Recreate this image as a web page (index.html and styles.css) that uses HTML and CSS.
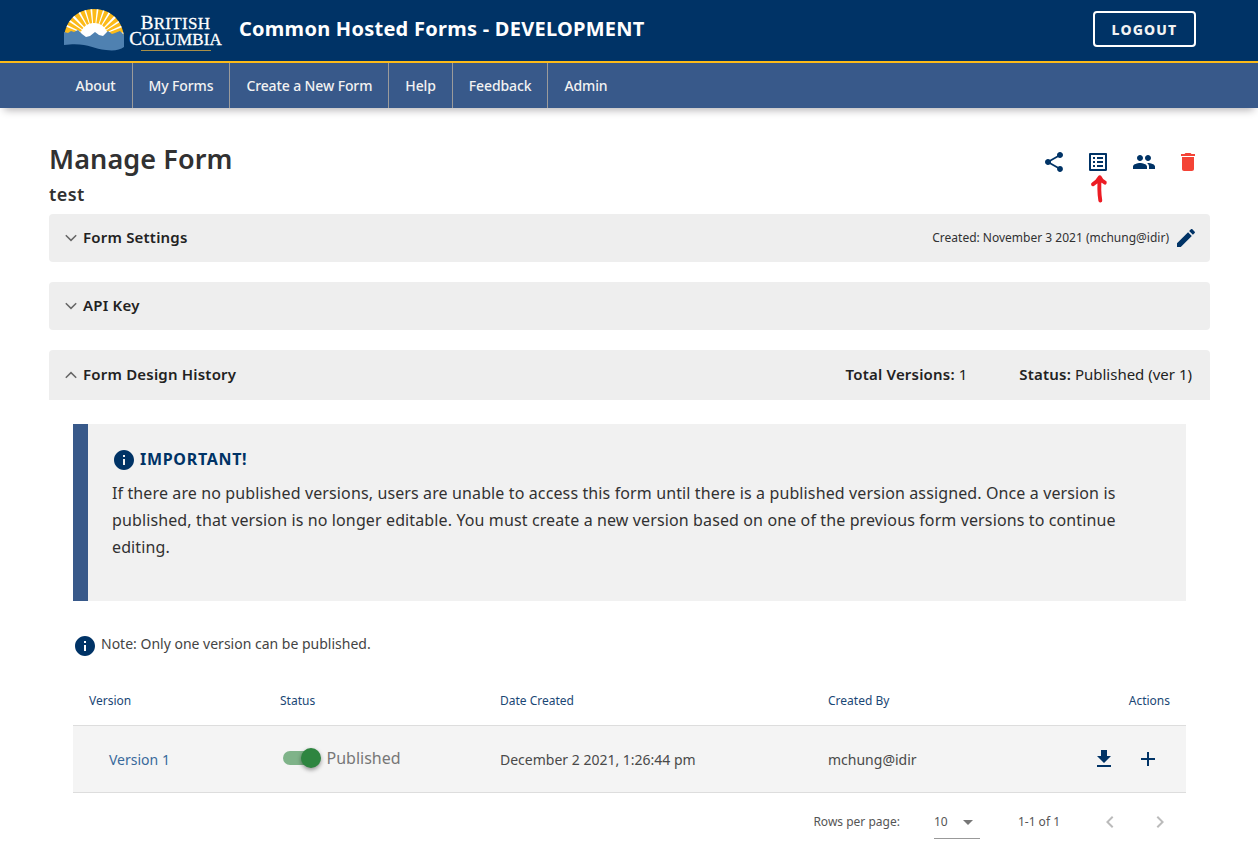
FILE: index.html
```html
<!DOCTYPE html>
<html lang="en">
<head>
<meta charset="utf-8">
<title>Common Hosted Forms</title>
<link rel="stylesheet" href="styles.css">
</head>
<body>
<header class="header">
  <div class="brand">
    <svg class="sun" width="62" height="43" viewBox="0 0 62 43">
      <defs><clipPath id="dome"><path d="M1 30C2 12 15 1 31 1s29 11 30 29z"/></clipPath></defs>
      <g clip-path="url(#dome)">
        <rect width="62" height="42" fill="#fcba19"/>
        <circle cx="31" cy="29" r="14" fill="#fff"/>
        <path fill="#fff" d="M31 30L-4 25l-1 2zM31 30L0 15l-1 2zM31 30L3 9l-1 2zM31 30L8 4L6 6zM31 30L15 0l-2 1zM31 30L22-1h-2zM31 30L29-2h-2zM31 30L36-2h-2zM31 30L43-1h-2zM31 30L50 1l-2-1zM31 30L57 6l-2-2zM31 30L62 11l-1-2zM31 30L65 17l-1-2zM31 30L67 25v-2z"/>
      </g>
      <path fill="#4f81b1" d="M1 37V24l4 1 3-2 3 1 4-2 4 4 4 3 4-1 5-4 4 3 4 1 5-5 4 3 3-1 5-2 4 4v12C57 42 51 43 43 42 29 41 24 34 1 37z"/>
    </svg>
    <div class="wordmark"><span class="wm-top">B<small>RITISH</small></span><span class="wm-bottom">C<small>OLUMBIA</small></span><i></i></div>
  </div>
  <div class="app-title">Common Hosted Forms - DEVELOPMENT</div>
  <button class="logout">LOGOUT</button>
</header>
<nav class="nav"><a>About</a><a>My Forms</a><a>Create a New Form</a><a>Help</a><a>Feedback</a><a>Admin</a></nav>
<main class="main">
  <div class="page-head">
    <div>
      <h1>Manage Form</h1>
      <h2>test</h2>
    </div>
    <div class="tools">
      <svg class="icon" viewBox="0 0 24 24"><path d="M18 16.08c-.76 0-1.44.3-1.96.77L8.91 12.7c.05-.23.09-.46.09-.7s-.04-.47-.09-.7l7.05-4.11c.54.5 1.25.81 2.04.81 1.66 0 3-1.34 3-3s-1.34-3-3-3-3 1.34-3 3c0 .24.04.47.09.7L8.04 9.81C7.5 9.31 6.79 9 6 9c-1.66 0-3 1.34-3 3s1.34 3 3 3c.79 0 1.5-.31 2.04-.81l7.12 4.16c-.05.21-.08.43-.08.65 0 1.61 1.31 2.92 2.92 2.92s2.92-1.31 2.92-2.92-1.31-2.92-2.92-2.92z"/></svg>
      <span class="pointed">
        <svg class="icon" viewBox="0 0 24 24"><path d="M11 7h6v2h-6zm0 4h6v2h-6zm0 4h6v2h-6zM7 7h2v2H7zm0 4h2v2H7zm0 4h2v2H7zM20.1 3H3.9c-.5 0-.9.4-.9.9v16.2c0 .4.4.9.9.9h16.2c.4 0 .9-.5.9-.9V3.9c0-.5-.5-.9-.9-.9zM19 19H5V5h14z"/></svg>
        <svg class="arrow" width="20" height="32" viewBox="0 0 20 32"><path d="M11.300 27.500Q9.600 17 10.800 4.500M4 11.200Q8 9 10.800 4.200Q12.500 8 15.800 9.600" fill="none" stroke="#ec1c24" stroke-width="3.900" stroke-linecap="round" stroke-linejoin="round"/></svg>
      </span>
      <svg class="icon" viewBox="0 0 24 24"><path d="M16 11c1.660 0 2.990-1.340 2.990-3S17.660 5 16 5s-3 1.340-3 3 1.340 3 3 3zm-8 0c1.660 0 2.990-1.340 2.990-3S9.660 5 8 5 5 6.340 5 8s1.340 3 3 3zm0 2c-2.330 0-7 1.170-7 3.500V19h14v-2.500C15 14.170 10.330 13 8 13zm8 0c-.29 0-.62.02-.97.05 1.160.84 1.970 1.970 1.970 3.450V19h6v-2.500c0-2.330-4.670-3.500-7-3.500z"/></svg>
      <svg class="icon danger" viewBox="0 0 24 24"><path d="M6 19c0 1.100.9 2 2 2h8c1.100 0 2-.9 2-2V7H6v12zM19 4h-3.500l-1-1h-5l-1 1H5v2h14V4z"/></svg>
    </div>
  </div>
  <section class="panel">
    <svg class="chev" viewBox="0 0 12 8"><path d="M.8 1.200L6 6.400l5.200-5.200"/></svg><strong>Form Settings</strong>
    <span class="created">Created: November 3 2021 (mchung@idir)</span>
    <svg class="icon" viewBox="0 0 24 24"><path d="M3 17.250V21h3.750L17.810 9.940l-3.750-3.750L3 17.250zM20.710 7.040c.39-.39.39-1.020 0-1.410l-2.340-2.340c-.39-.39-1.020-.39-1.410 0l-1.830 1.830 3.750 3.750 1.830-1.830z"/></svg>
  </section>
  <section class="panel"><svg class="chev" viewBox="0 0 12 8"><path d="M.8 1.200L6 6.400l5.200-5.200"/></svg><strong>API Key</strong></section>
  <section class="panel open"><svg class="chev" viewBox="0 0 12 8"><path d="M.8 6.800L6 1.600l5.200 5.200"/></svg><strong>Form Design History</strong>
    <span class="total"><b>Total Versions:</b> 1</span><span class="status"><b>Status:</b> Published (ver 1)</span>
  </section>
  <div class="content">
    <div class="notice">
      <h3><svg class="icon" viewBox="0 0 24 24"><path d="M12 2C6.480 2 2 6.480 2 12s4.480 10 10 10 10-4.480 10-10S17.520 2 12 2zm1 15h-2v-6h2v6zm0-8h-2V7h2v2z"/></svg><span>IMPORTANT!</span></h3>
      <p>If there are no published versions, users are unable to access this form until there is a published version assigned. Once a version is<br>published, that version is no longer editable. You must create a new version based on one of the previous form versions to continue<br>editing.</p>
    </div>
    <div class="note"><svg class="icon" viewBox="0 0 24 24"><path d="M12 2C6.480 2 2 6.480 2 12s4.480 10 10 10 10-4.480 10-10S17.520 2 12 2zm1 15h-2v-6h2v6zm0-8h-2V7h2v2z"/></svg><span>Note: Only one version can be published.</span></div>
    <div class="row thead"><span>Version</span><span>Status</span><span>Date Created</span><span>Created By</span><span class="right">Actions</span></div>
    <div class="row tbody">
      <a class="version">Version 1</a>
      <span class="switch"><i class="track"><i class="thumb"></i></i><span>Published</span></span>
      <span>December 2 2021, 1:26:44 pm</span><span>mchung@idir</span>
      <span class="actions">
        <svg class="icon" viewBox="0 0 24 24"><path d="M19 9h-4V3H9v6H5l7 7 7-7zM5 18v2h14v-2H5z"/></svg>
        <svg class="icon" viewBox="0 0 24 24"><path d="M19 13h-6v6h-2v-6H5v-2h6V5h2v6h6v2z"/></svg>
      </span>
    </div>
    <div class="pager">
      <span class="rpp">Rows per page:</span>
      <span class="select">10<i></i></span>
      <span class="range">1-1 of 1</span>
      <svg class="page-btn" viewBox="0 0 24 24"><path d="M15.410 7.410L14 6l-6 6 6 6 1.410-1.410L10.830 12z"/></svg>
      <svg class="page-btn" viewBox="0 0 24 24"><path d="M10 6L8.590 7.410 13.170 12l-4.580 4.590L10 18l6-6z"/></svg>
    </div>
  </div>
</main>
</body>
</html>
```
FILE: styles.css
```css
* { box-sizing: border-box; }
body { margin: 0; width: 1258px; height: 858px; overflow: hidden; background: #fff; font-family: "Noto Sans", sans-serif; color: #313132; }
h1, h2, h3, p { margin: 0; }
.header { display: flex; height: 63px; padding: 0 62px 0 63px; background: #036; border-bottom: 2px solid #fcba19; }
.brand { display: flex; width: 176px; padding-top: 8px; }
.wordmark { display: flex; flex-direction: column; align-items: center; width: 95px; margin-left: 3px; padding-top: 7px; color: #fff; font-family: "Liberation Serif", serif; font-size: 19px; line-height: 15px; white-space: nowrap; -webkit-text-stroke: .3px #fff; }
.wordmark small { font-size: 17px; }
.wm-top { letter-spacing: .3px; }
.wm-bottom { letter-spacing: .08px; }
.wm-top, .wm-bottom { height: 16px; }
.wordmark i { width: 70px; height: 1px; margin-top: 3px; background: #a99047; }
.app-title { padding-top: 15px; color: #fff; font-size: 20px; line-height: 27px; font-weight: 700; letter-spacing: .26px; white-space: nowrap; }
.logout { width: 103px; height: 36px; margin: 11px 0 0 auto; padding: 0; border: 2px solid #fff; border-radius: 4px; background: #036; color: #f2f2f2; font: 800 14px "Noto Sans", sans-serif; letter-spacing: 1.15px; }
.nav { display: flex; height: 45px; padding-left: 59.6px; background: #38598a; box-shadow: 0 6px 8px -4px #b3b1b3; }
.nav a { padding: 0 16px; border-right: 1px solid #9b9b9b; color: #f2f2f2; font-size: 14px; line-height: 45px; font-weight: 500; letter-spacing: -.12px; white-space: nowrap; }
.nav a:last-child { border: 0; }
.main { padding: 34px 48px 0 49px; }
.page-head { display: flex; justify-content: space-between; height: 72px; }
h1 { margin-top: -1px; font-size: 27px; line-height: 35px; font-weight: 650; letter-spacing: .1px; }
h2 { padding-top: 4px; font-size: 18px; line-height: 28px; font-weight: 600; letter-spacing: .4px; }
.icon { display: block; flex: none; width: 24px; height: 24px; fill: #036; }
.tools { display: flex; gap: 20px; padding: 8px 10px 0 0; }
.tools .icon:nth-child(3) { margin-left: 2px; }
.tools .danger { fill: #f44336; }
.pointed { position: relative; }
.arrow { position: absolute; left: 3px; top: 23px; }
.panel { display: flex; align-items: center; height: 48px; margin-bottom: 20px; padding: 0 12px 0 16px; border-radius: 4px; background: #eee; font-size: 15px; color: #222; white-space: nowrap; }
.panel strong { padding-bottom: 2px; font-weight: 600; letter-spacing: .2px; }
.open { height: 50px; margin-bottom: 0; padding-right: 18px; border-radius: 4px 4px 0 0; }
.chev { width: 12px; height: 8px; margin-right: 6px; fill: none; stroke: #666; stroke-width: 1.5; }
.created { margin: 0 5px 0 auto; padding-bottom: 1px; font-size: 12px; color: #313132; }
.total { margin-left: auto; padding-bottom: 2px; }
.status { margin-left: 52px; padding-bottom: 2px; }
.panel b { font-weight: 600; letter-spacing: .2px; }
.content { padding: 24px; }
.notice { height: 177px; padding: 22px 24px; border-left: 15px solid #38598a; background: #f1f1f1; }
.notice h3 { display: flex; align-items: center; height: 26px; color: #036; font-size: 16px; font-weight: 700; letter-spacing: .7px; }
.notice h3 .icon { margin-top: 2px; }
.notice h3 span { margin-left: 4px; }
.notice p { padding-top: 8px; font-size: 16px; line-height: 27px; letter-spacing: .12px; white-space: nowrap; }
.note { display: flex; height: 75px; padding-top: 33px; font-size: 14px; line-height: 20px; color: #444; }
.note span { margin-left: 4px; }
.row { display: grid; grid-template-columns: 191px 220px 328px 200px 1fr; align-items: center; padding: 0 16px; border-bottom: 1px solid #ddd; white-space: nowrap; }
.thead { height: 50px; color: #1a4775; font-size: 12px; }
.right { text-align: right; }
.tbody { height: 67px; background: #f4f4f4; color: #494949; font-size: 14px; }
.version { padding-left: 20px; color: #38699b; }
.switch { display: flex; align-items: center; gap: 8.5px; padding: 0 0 3px 3px; font-size: 16px; color: #777; }
.track { position: relative; width: 35px; height: 14px; border-radius: 7px; background: #7fb389; }
.thumb { position: absolute; left: 18px; top: -3px; width: 20px; height: 20px; border-radius: 50%; background: #2e8540; box-shadow: 0 2px 4px rgba(0,0,0,.4); }
.actions { display: flex; justify-content: flex-end; gap: 20px; padding: 0 10px 1px 0; }
.pager { display: flex; align-items: center; justify-content: flex-end; height: 58px; padding-right: 14px; font-size: 12px; color: #555; }
.rpp, .range { padding-bottom: 1px; }
.select { display: flex; align-items: center; width: 46px; height: 34px; margin: 0 38px 0 34px; border-bottom: 1px solid #999; }
.select i { margin: 2px 0 0 15px; border: 5px solid transparent; border-top-color: #777; border-bottom: 0; }
.range { margin-right: 38px; }
.page-btn { width: 24px; height: 24px; fill: #bbb; }
.page-btn + .page-btn { margin-left: 26px; }
```
